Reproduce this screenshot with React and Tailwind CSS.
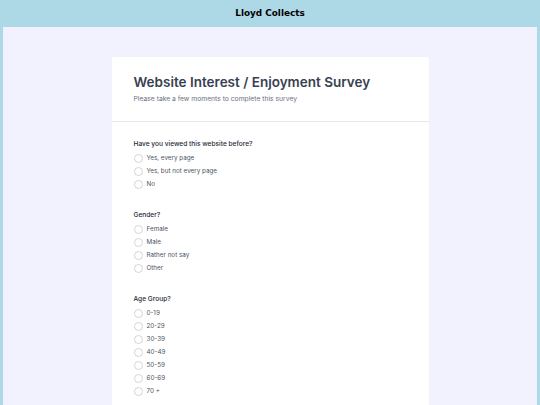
const questions = [
  {
    label: 'Have you viewed this website before?',
    options: ['Yes, every page', 'Yes, but not every page', 'No'],
  },
  {
    label: 'Gender?',
    options: ['Female', 'Male', 'Rather not say', 'Other'],
  },
  {
    label: 'Age Group?',
    options: ['0-19', '20-29', '30-39', '40-49', '50-59', '60-69', '70 +'],
  },
];

function Question({ q }) {
  return (
    <fieldset className="mb-[19px]">
      <legend className="text-[6.6px] leading-[10px] font-medium text-[#1f2937]">
        {q.label}
      </legend>
      <div className="mt-[3px] flex flex-col">
        {q.options.map((opt) => (
          <label key={opt} className="flex items-center h-[13px] gap-[4px]">
            <span className="w-[9px] h-[9px] rounded-full border border-[#d1d5db] bg-white" />
            <span className="text-[6.3px] text-[#4b5563]">{opt}</span>
          </label>
        ))}
      </div>
    </fieldset>
  );
}

export default function App() {
  return (
    <div className="min-h-screen bg-[#add8e6] font-['Inter',sans-serif]">
      {/* Top bar */}
      <header className="h-[27px] flex items-center justify-center">
        <h1 className="font-['DejaVu_Sans',sans-serif] font-bold text-[8.9px] text-black">
          Lloyd Collects
        </h1>
      </header>

      <main className="mx-[3px] bg-[#f1f2fe] min-h-[378px] pt-[30px] pb-[30px]">
        <div className="w-[317px] mx-auto">
          {/* Survey heading */}
          <div className="bg-white rounded-t-[2px] border-b border-[#e5e7eb] px-[22px] pt-[17px] h-[65px]">
            <h2 className="text-[13.5px] leading-[17px] font-semibold text-[#374151]">
              Website Interest / Enjoyment Survey
            </h2>
            <p className="mt-[3px] text-[6.75px] leading-[10px] text-[#6b7280]">
              Please take a few moments to complete this survey
            </p>
          </div>

          {/* Questions */}
          <div className="bg-white px-[22px] pt-[17px] pb-[24px] rounded-b-[2px]">
            {questions.map((q) => (
              <Question key={q.label} q={q} />
            ))}
          </div>
        </div>
      </main>
    </div>
  );
}
